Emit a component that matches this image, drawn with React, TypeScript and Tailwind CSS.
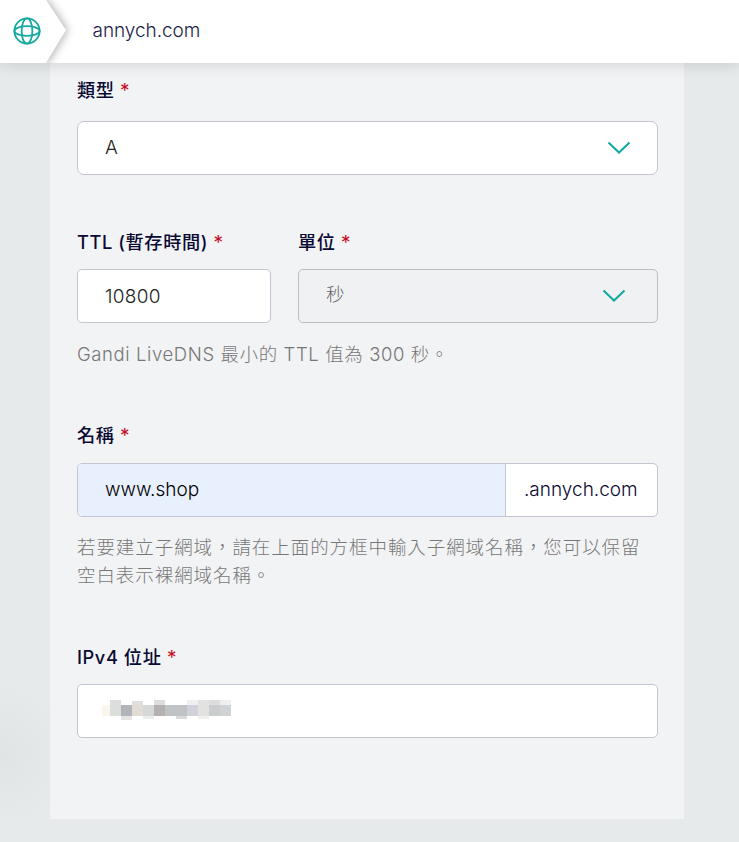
import type { ReactNode } from 'react'

interface LabelProps {
  children: ReactNode
}

const Label = ({ children }: LabelProps) => (
  <div className="h-[26px] text-[18.2px] leading-[26px] font-medium tracking-[0.6px] text-[#0a0a33] whitespace-nowrap">
    {children} <span className="text-[19px] font-normal text-[#c80a1e]">*</span>
  </div>
)

const Chevron = () => (
  <svg width="24" height="14" viewBox="0 0 24 14" fill="none" stroke="#12a8a0" strokeWidth="2">
    <path d="M1.5 1.5 12 11.5 22.5 1.5" />
  </svg>
)

const GlobeIcon = () => (
  <svg width="28" height="28" viewBox="0 0 28 28" fill="none" stroke="#16a9a0" strokeWidth="1.8">
    <circle cx="14" cy="14" r="12.6" />
    <ellipse cx="14" cy="14" rx="5.4" ry="12.6" />
    <ellipse cx="14" cy="14" rx="12.6" ry="4.8" />
  </svg>
)

// x, y, width, height, fill
const blocks: [number, number, number, number, string][] = [
  [0, 5, 8, 11, '#fbf6ec'],
  [8, 0, 11, 16, '#dcdedc'],
  [19, 5, 11, 11, '#b1b4b9'],
  [19, 16, 11, 4, '#e6e4e4'],
  [30, 1, 11, 4, '#dfdfdf'],
  [30, 5, 11, 11, '#e2dcd7'],
  [41, 5, 11, 11, '#d5d8d7'],
  [41, 16, 11, 3, '#ededed'],
  [52, 0, 11, 5, '#e0dcda'],
  [52, 5, 11, 11, '#b5b1b0'],
  [63, 5, 22, 11, '#c0c3c5'],
  [74, 16, 11, 3, '#d9d9db'],
  [85, 0, 11, 5, '#f0f0f3'],
  [85, 5, 11, 11, '#d1d1d9'],
  [96, 0, 11, 16, '#e2e2e1'],
  [96, 16, 11, 3, '#f0f0ef'],
  [107, 0, 11, 5, '#dddddd'],
  [107, 5, 11, 11, '#cacccd'],
  [118, 0, 11, 5, '#eceef0'],
  [118, 5, 11, 11, '#d0d3d6'],
]

const MaskedAddress = () => (
  <svg width="129" height="20" viewBox="0 0 129 20" shapeRendering="crispEdges">
    {blocks.map(([x, y, w, h, fill]) => (
      <rect key={`${x}-${y}`} x={x} y={y} width={w} height={h} fill={fill} />
    ))}
  </svg>
)

const App = () => {
  return (
    <div className="h-[842px] overflow-hidden bg-[#e6eaeb] bg-[radial-gradient(circle_at_0px_755px,#e0e4e5_0,#e6eaeb_70px)] font-['Inter','Noto_Sans_CJK_TC',sans-serif]">
      <header className="relative z-10 flex h-[63px] items-center bg-white shadow-[0_2px_14px_rgba(0,0,0,0.13)]">
        <div className="h-[63px] w-[92.5px] shrink-0 overflow-hidden">
          <div className="h-[63px] w-[67px] drop-shadow-[2px_0_4px_rgba(0,0,0,0.3)]">
            <div className="flex h-[63px] items-center bg-white pl-[12.5px] pb-[2px] [clip-path:polygon(0_0,46px_0,66px_30px,46px_63px,0_63px)]">
              <GlobeIcon />
            </div>
          </div>
        </div>
        <h1 className="text-[19px] font-light tracking-[-0.05px] text-[#1c1c45]">annych.com</h1>
      </header>

      <main className="ml-[50px] h-[756px] w-[634px] bg-[#f2f3f5] pt-[14px] pl-[27px] pr-[26px]">
        <section>
          <Label>類型</Label>
          <div className="mt-[18px] flex h-[54px] items-center justify-between rounded-[7px] border border-[#c4c5d0] bg-white pl-[27px] pr-[26px]">
            <span className="text-[19px] font-light text-[#222222]">A</span>
            <Chevron />
          </div>
        </section>

        <section className="mt-[54px]">
          <div className="flex gap-[27px]">
            <div className="w-[194px]">
              <Label>TTL (暫存時間)</Label>
              <div className="mt-[14px] flex h-[54px] items-center rounded-[5px] border border-[#c4c5d0] bg-white pt-[2px] pl-[27px] text-[19px] font-light tracking-[0.3px] text-[#222222]">
                10800
              </div>
            </div>
            <div className="flex-1">
              <Label>單位</Label>
              <div className="mt-[14px] flex h-[54px] items-center justify-between rounded-[5px] border border-[#bcbdc0] bg-[#f0f1f3] pl-[27px] pr-[31px]">
                <span className="pb-[2px] text-[18.5px] font-light text-[#666666]">秒</span>
                <Chevron />
              </div>
            </div>
          </div>
          <p className="mt-[17px] text-[18.5px] leading-[28px] font-light tracking-[0.6px] text-[#777777]">
            Gandi LiveDNS 最小的 TTL 值為 300 秒。
          </p>
        </section>

        <section className="mt-[54px]">
          <Label>名稱</Label>
          <div className="mt-[15px] flex h-[54px] overflow-hidden rounded-[5px] border border-[#c4c5d0] bg-white text-[19px] font-light">
            <div className="flex w-[428px] items-center border-r border-[#c4c5d0] bg-[#e8f0fe] pl-[27px] text-black">
              www.shop
            </div>
            <div className="flex items-center pl-[18px] text-[#0a0a33]">.annych.com</div>
          </div>
          <p className="mt-[16px] text-[18.5px] leading-[28px] font-light tracking-[0.93px] text-[#777777]">
            若要建立子網域，請在上面的方框中輸入子網域名稱，您可以保留
            <br />
            空白表示裸網域名稱。
          </p>
        </section>

        <section className="mt-[55px]">
          <Label>IPv4 位址</Label>
          <div className="mt-[14px] flex h-[54px] items-start rounded-[5px] border border-[#c4c5d0] bg-white pt-[15px] pl-[24px]">
            <MaskedAddress />
          </div>
        </section>
      </main>
    </div>
  )
}

export default App
